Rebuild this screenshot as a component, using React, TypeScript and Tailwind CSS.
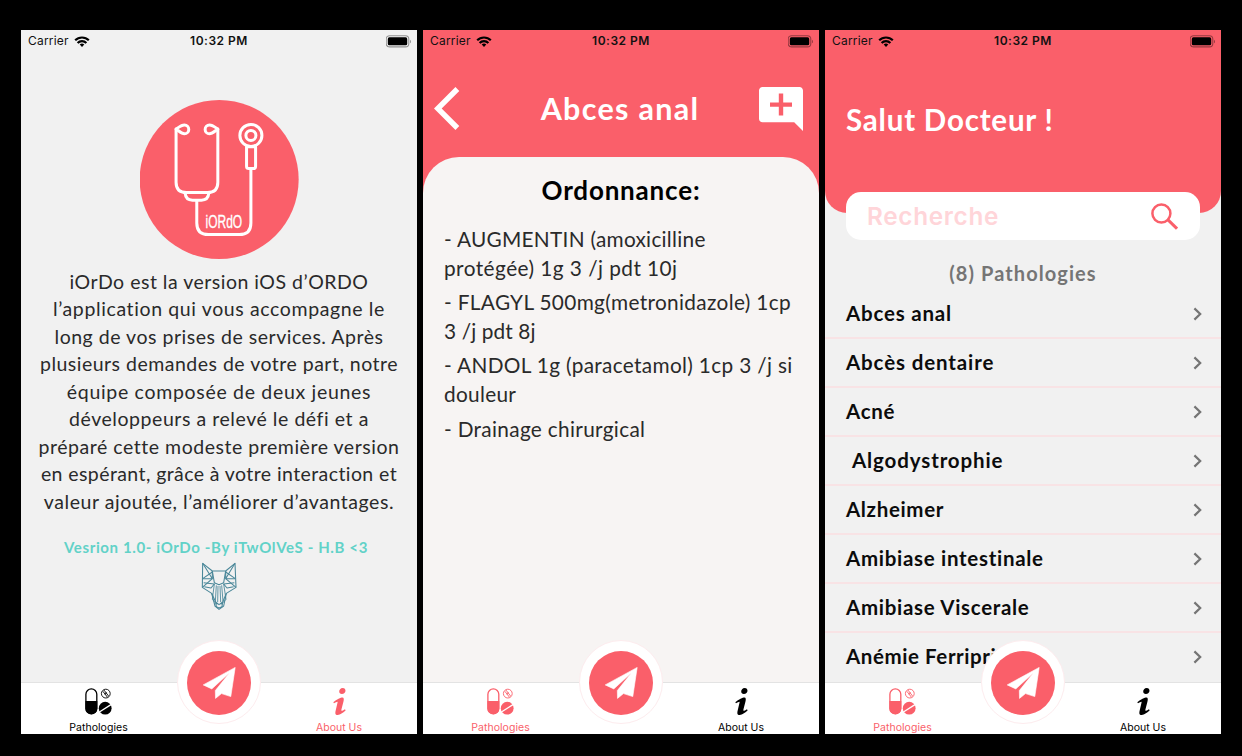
import type { ReactNode } from 'react';

const lato = "font-['Lato',sans-serif]";
const inter = "font-['Inter',sans-serif]";

const aboutLines: { text: string; track: string }[] = [
  { text: 'iOrDo est la version iOS d’ORDO', track: 'tracking-[0.5px]' },
  { text: 'l’application qui vous accompagne le', track: 'tracking-[0.62px]' },
  { text: 'long de vos prises de services. Après', track: 'tracking-[0.52px]' },
  { text: 'plusieurs demandes de votre part, notre', track: 'tracking-[0.49px]' },
  { text: 'équipe composée de deux jeunes', track: 'tracking-[0.69px]' },
  { text: 'développeurs a relevé le défi et a', track: 'tracking-[0.55px]' },
  { text: 'préparé cette modeste première version', track: 'tracking-[0.53px]' },
  { text: 'en espérant, grâce à votre interaction et', track: 'tracking-[0.41px]' },
  { text: 'valeur ajoutée, l’améliorer d’avantages.', track: 'tracking-[0.56px]' },
];

const prescription: { text: string; track: string }[][] = [
  [
    { text: '- AUGMENTIN (amoxicilline', track: 'tracking-[0.28px]' },
    { text: 'protégée) 1g 3 /j pdt 10j', track: 'tracking-[0.45px]' },
  ],
  [
    { text: '- FLAGYL 500mg(metronidazole) 1cp', track: 'tracking-[0.34px]' },
    { text: '3 /j pdt 8j', track: 'tracking-[0.12px]' },
  ],
  [
    { text: '- ANDOL 1g (paracetamol) 1cp 3 /j si', track: 'tracking-[0.33px]' },
    { text: 'douleur', track: 'tracking-[0.3px]' },
  ],
  [{ text: '- Drainage chirurgical', track: 'tracking-[0.32px]' }],
];

const pathologies: { name: string; track: string; indent?: boolean }[] = [
  { name: 'Abces anal', track: 'tracking-[0.8px]' },
  { name: 'Abcès dentaire', track: 'tracking-[0.87px]' },
  { name: 'Acné', track: 'tracking-[0.7px]' },
  { name: 'Algodystrophie', track: 'tracking-[0.88px]', indent: true },
  { name: 'Alzheimer', track: 'tracking-[0.65px]' },
  { name: 'Amibiase intestinale', track: 'tracking-[0.7px]' },
  { name: 'Amibiase Viscerale', track: 'tracking-[0.69px]' },
  { name: 'Anémie Ferriprive', track: 'tracking-[0.58px]' },
];

function StatusBar() {
  return (
    <div className={`${inter} grid h-[22px] shrink-0 grid-cols-3 items-center pl-[7px] pr-[5px] text-[12px] text-[#111]`}>
      <div className="flex items-center gap-[5px]">
        <span className="tracking-[0.2px]">Carrier</span>
        <svg className="h-[11px] w-[16px]" viewBox="0 0 15 11" fill="none" stroke="#000" strokeWidth="2.2">
          <path d="M0.7 4.3a9.6 9.6 0 0 1 13.6 0" />
          <path d="M3.1 6.9a6.2 6.2 0 0 1 8.8 0" />
          <path d="M7.5 10.9 5.2 8.6a3.3 3.3 0 0 1 4.6 0z" fill="#000" stroke="none" />
        </svg>
      </div>
      <span className="pr-[2px] text-center font-semibold tracking-[0.5px]">10:32 PM</span>
      <svg className="h-[13px] w-[26px] justify-self-end" viewBox="0 0 26 13">
        <rect x="0.2" y="0.7" width="22.6" height="11.2" rx="3.4" fill="none" stroke="#000" strokeOpacity="0.4" strokeWidth="1.1" />
        <rect x="1.8" y="2.3" width="19.4" height="8" rx="1.6" fill="#000" />
        <path d="M24 4.7v3.6c1.3-.4 1.3-3.2 0-3.6z" fill="#000" fillOpacity="0.4" />
      </svg>
    </div>
  );
}

function PillsIcon() {
  return (
    <svg className="h-[27px] w-[27px]" viewBox="0 0 27 27">
      <rect x="0.9" y="0.9" width="10.9" height="25" rx="5.45" fill="none" stroke="currentColor" strokeWidth="1.3" />
      <path d="M0.4 13h11.9v7.4a5.95 5.95 0 0 1-11.9 0z" fill="currentColor" />
      <g fill="none" stroke="currentColor" strokeWidth="0.9">
        <circle cx="20.8" cy="5.6" r="4.4" />
        <path d="M17.9 3.3 22.6 9.4M19 2.1l4.7 6.1M19.6 6.1l2-1.6" />
      </g>
      <circle cx="20.2" cy="20.2" r="6.4" fill="currentColor" />
      <path d="M14.4 24 26 16.6" stroke="#fff" strokeWidth="1.3" />
    </svg>
  );
}

function InfoIcon() {
  return (
    <svg className="h-[27px] w-[27px]" viewBox="0 0 20 20" fill="currentColor">
      <path d="M12.432 0c1.34 0 2.01.912 2.01 1.957 0 1.305-1.164 2.512-2.679 2.512-1.269 0-2.009-.75-1.974-1.99C9.789 1.436 10.67 0 12.432 0zM8.309 20c-1.058 0-1.833-.652-1.093-3.524l1.214-5.092c.211-.814.246-1.141 0-1.141-.317 0-1.689.562-2.502 1.117l-.528-.88c2.572-2.186 5.531-3.467 6.801-3.467 1.057 0 1.233 1.273.705 3.23l-1.391 5.352c-.246.945-.141 1.271.106 1.271.317 0 1.357-.392 2.379-1.207l.6.814C12.098 19.02 9.365 20 8.309 20z" />
    </svg>
  );
}

function TabBar({ active }: { active: 'list' | 'about' }) {
  return (
    <nav className={`${inter} relative grid h-[52px] shrink-0 grid-cols-[155px_1fr_156px] border-t border-[#e3e3e3] bg-white text-[10.5px] leading-[13px]`}>
      <div className={`flex flex-col items-center pt-[5px] ${active === 'list' ? 'text-[#fa5f6a]' : 'text-black'}`}>
        <PillsIcon />
        <span className="mt-[6px] tracking-[0.05px]">Pathologies</span>
      </div>
      <div className="flex justify-center">
        <div className="absolute left-[156px] top-[-43px] flex size-[84px] items-center justify-center rounded-full border border-[#fdecee] bg-white">
          <div className="mt-px flex size-[64px] items-center justify-center rounded-full bg-[#fa5f6a]">
            <svg className="h-[32px] w-[33px]" viewBox="0 0 33 32" fill="#fff">
              <path d="M32.2.4.2 17.9l8.6 4L26.5 5.8 12.3 23.6l.2 7.8 6-4.8 9.3 3z" stroke="#fff" strokeWidth="0.6" strokeLinejoin="round" />
            </svg>
          </div>
        </div>
      </div>
      <div className={`flex flex-col items-center pt-[5px] ${active === 'about' ? 'text-[#fa5f6a]' : 'text-black'}`}>
        <InfoIcon />
        <span className="mt-[6px]">About Us</span>
      </div>
    </nav>
  );
}

function Screen({ className, active, children }: { className: string; active: 'list' | 'about'; children: ReactNode }) {
  return (
    <section className={`flex h-[704px] w-[396px] flex-col overflow-hidden ${className}`}>
      <div className="flex min-h-0 flex-1 flex-col overflow-hidden">{children}</div>
      <TabBar active={active} />
    </section>
  );
}

function Stethoscope() {
  return (
    <svg className="size-[159px]" viewBox="61 30 476 476">
      <circle cx="298" cy="268" r="238" fill="#fa5f6a" />
      <g fill="none" stroke="#fff" strokeWidth="9" strokeLinecap="round" strokeLinejoin="round">
        <path d="M169 117v159q0 31 31 31h63q31 0 31-31V117" />
        <path d="M169 117c9-6 16-12 25-12a13 13 0 0 1 0 26c-9 0-16-8-25-14z" />
        <path d="M294 117c-9-6-16-12-25-12a13 13 0 0 0 0 26c9 0 16-8 25-14z" />
        <path d="M196 309q2 21 22 21h27q20 0 22-21" />
        <path d="M231 332v66q0 35 35 35h92q35 0 35-35V238" />
        <circle cx="393" cy="136" r="33" />
        <circle cx="393" cy="136" r="15" />
        <path d="M380 170v58q0 7 7 7h13q7 0 7-7v-58z" />
      </g>
      <text x="257" y="413" fontFamily="Liberation Sans Narrow, Liberation Sans, sans-serif" fontSize="54" fill="#fff" stroke="#fff" strokeWidth="1" textLength="110" lengthAdjust="spacingAndGlyphs">
        iORdO
      </text>
    </svg>
  );
}

function Wolf() {
  return (
    <svg className="h-[48px] w-[36px]" viewBox="0 0 108 144" fill="none" stroke="#4a8799" strokeWidth="3.2" strokeLinejoin="round">
      <path d="M5 4 34 27 74 27 102 4 105 76 76 94 68 132 54 142 42 132 32 94 4 76z" />
      <path d="M5 4 34 50 34 27M102 4 74 50 74 27M5 50 34 50 M103 50 74 50" />
      <path d="M5 50 34 30M103 50 74 30M34 50 4 76M74 50 105 76M34 27 40 62 54 68 68 62 74 27" />
      <path d="M8 62 40 66 30 78 10 74M100 62 68 66 78 78 98 74" />
      <path d="M40 66 34 112 48 128M68 66 75 112 60 128M46 70 43 118M62 70 66 118M51 72 50 120M57 72 59 120" strokeWidth="2.6" />
      <path d="M32 94 44 120 54 128 65 120 76 94M44 120 46 134 54 138 63 134 65 120" />
    </svg>
  );
}

function AboutScreen() {
  return (
    <Screen className="bg-[#f1f1f1]" active="about">
      <StatusBar />
      <div className={`${lato} flex flex-col items-center pt-[48px]`}>
        <Stethoscope />
        <div className="mt-[9px] text-center text-[19.5px] leading-[27.45px] text-[#2a2a2a]">
          {aboutLines.map((l) => (
            <div key={l.text} className={`whitespace-nowrap ${l.track}`}>{l.text}</div>
          ))}
        </div>
        <div className="mt-[21.5px] pr-[6px] text-[15px] font-bold leading-[20px] tracking-[0.63px] text-[#62d2c8]">
          Vesrion 1.0- iOrDo -By iTwOlVeS - H.B &lt;3
        </div>
        <div className="mt-[5px] pr-px">
          <Wolf />
        </div>
      </div>
    </Screen>
  );
}

function DetailScreen() {
  return (
    <Screen className="bg-[#fa5f6a]" active="list">
      <StatusBar />
      <header className="flex h-[105px] shrink-0 items-start justify-between pl-[11px] pr-[16px] pt-[35px]">
        <svg className="h-[43px] w-[44px]" viewBox="0 2.1 20.3 19.8" fill="#fff">
          <path d="M11.67 3.87 9.9 2.1 0 12l9.9 9.9 1.77-1.77L3.54 12z" />
        </svg>
        <h1 className={`${lato} pl-[3px] text-[30.5px] font-bold leading-[43px] tracking-[1.3px] text-white`}>Abces anal</h1>
        <svg className="size-[44px]" viewBox="2 2 20 20" fill="#fff">
          <path d="M22 3.6C22 2.7 21.3 2 20.4 2H3.6C2.7 2 2 2.7 2 3.6v12.8c0 .9.7 1.6 1.6 1.6H18l4 4zM17 11h-4v4h-2v-4H7V9h4V5h2v4h4z" />
        </svg>
      </header>
      <article className={`${lato} min-h-0 flex-1 rounded-t-[36px] bg-[#f7f4f3] px-[21px] pt-[15px]`}>
        <h2 className="text-center text-[26px] font-bold leading-[36px] tracking-[0.82px] text-black">Ordonnance:</h2>
        <div className="mt-[15.5px] flex flex-col gap-[5.2px] text-[20.8px] leading-[29.1px] text-[#2a2a2a]">
          {prescription.map((item) => (
            <div key={item[0].text}>
              {item.map((l) => (
                <div key={l.text} className={`whitespace-nowrap ${l.track}`}>{l.text}</div>
              ))}
            </div>
          ))}
        </div>
      </article>
    </Screen>
  );
}

function ListScreen() {
  return (
    <Screen className="bg-[#f1f1f1]" active="list">
      <header className="h-[183px] shrink-0 rounded-b-[22px] bg-[#fa5f6a]">
        <StatusBar />
        <h1 className={`${lato} pl-[21px] pt-[48px] text-[29.5px] font-bold leading-[40px] tracking-[0.8px] text-white`}>
          Salut Docteur !
        </h1>
      </header>
      <div className="z-10 mx-[21px] -mt-[21px] flex h-[48px] shrink-0 items-center justify-between rounded-[15px] bg-white pl-[21px] pr-[22px]">
        <span className={`${inter} pt-px text-[24.3px] font-semibold tracking-[0.7px] text-[#ffd5d9]`}>Recherche</span>
        <svg className="size-[27px]" viewBox="0 0 27 27" fill="none" stroke="#fa5f6a">
          <circle cx="10.4" cy="10.4" r="9" strokeWidth="2.5" />
          <path d="M17 16.9 26 25.7" strokeWidth="3" />
        </svg>
      </div>
      <p className={`${lato} mb-[3px] mt-[19px] text-center text-[20px] font-bold leading-[28px] tracking-[1.08px] text-[#757575]`}>(8) Pathologies</p>
      <ul className={`${lato} flex flex-col text-[20.5px] font-bold text-[#0c0c0c]`}>
        {pathologies.map((p) => (
          <li key={p.name} className="flex h-[49px] shrink-0 items-center justify-between border-b-2 border-[#f8e3e5] pl-[21px] pr-[19px] last:border-transparent">
            <span className={`${p.track} ${p.indent ? 'pl-[6px]' : ''}`}>{p.name}</span>
            <svg className="h-[14px] w-[9px]" viewBox="0 0 9 14" fill="none" stroke="#757575" strokeWidth="2.2">
              <path d="M1.4 1.4 7.2 7l-5.8 5.6" />
            </svg>
          </li>
        ))}
      </ul>
    </Screen>
  );
}

export default function App() {
  return (
    <main className="flex h-[756px] w-[1242px] gap-[6px] bg-black pl-[21px] pt-[30px]">
      <AboutScreen />
      <DetailScreen />
      <ListScreen />
    </main>
  );
}
